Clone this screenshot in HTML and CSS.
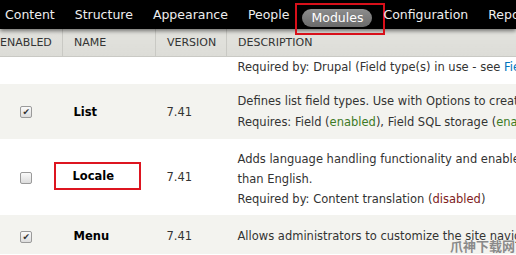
FILE: index.html
```html
<!DOCTYPE html>
<html lang="en">
<head>
  <meta charset="UTF-8" />
  <title>Modules</title>
  <link rel="stylesheet" href="styles.css">
</head>
<body>
  <div class="toolbar">
    <a href="#">Content</a>
    <a href="#">Structure</a>
    <a href="#">Appearance</a>
    <a href="#">People</a>
    <span class="marca"><a href="#" class="activo">Modules</a></span>
    <a href="#">Configuration</a>
    <a href="#">Reports</a>
  </div>

  <table class="modulos">
    <thead>
      <tr>
        <th class="col-check">Enabled</th>
        <th class="col-nombre">Name</th>
        <th class="col-version">Version</th>
        <th>Description</th>
      </tr>
    </thead>
    <tbody>
      <tr class="fila-1">
        <td></td>
        <td></td>
        <td></td>
        <td class="desc">Required by: Drupal (Field type(s) in use - see <a href="#">Field list</a>)</td>
      </tr>
      <tr class="par fila-2">
        <td class="col-check"><span class="check on">&#10004;</span></td>
        <td class="nombre">List</td>
        <td>7.41</td>
        <td class="desc">Defines list field types. Use with Options to create selection lists.<br>
          Requires: Field (<span class="si">enabled</span>), Field SQL storage (<span class="si">enabled</span>)</td>
      </tr>
      <tr class="fila-3">
        <td class="col-check"><span class="check"></span></td>
        <td class="nombre"><span class="marca-nombre">Locale</span></td>
        <td>7.41</td>
        <td class="desc">Adds language handling functionality and enables the translation of the user interface to languages other<br>than English.<br>
          Required by: Content translation (<span class="no">disabled</span>)</td>
      </tr>
      <tr class="par fila-4">
        <td class="col-check"><span class="check on">&#10004;</span></td>
        <td class="nombre">Menu</td>
        <td>7.41</td>
        <td class="desc">Allows administrators to customize the site navigation menu.</td>
      </tr>
    </tbody>
  </table>

  <div class="sello">爪神下载网</div>
</body>
</html>
```

FILE: styles.css
```css
body {
  margin: 0;
  font-family: "DejaVu Sans", Verdana, sans-serif;
  font-size: 11.5px;
  color: #333;
  background-color: #fff;
  overflow: hidden;
  width: 516px;
  height: 255px;
  position: relative;
}
.toolbar {
  height: 29px;
  background-color: #000;
  display: flex;
  align-items: center;
  white-space: nowrap;
  padding-left: 5px;
  box-shadow: 0 2px 4px rgba(0, 0, 0, 0.5);
  position: relative;
  z-index: 1;
}
.toolbar a {
  color: #eee;
  text-decoration: none;
  font-size: 12.5px;
  margin-right: 20px;
}
.marca {
  border: 2px solid #d8101a;
  padding: 4px 11px 6px 5px;
  margin: 4px -2px -4px -14px;
  display: flex;
}
.toolbar .marca a {
  margin-right: 0;
}
.toolbar .activo {
  background: linear-gradient(#8d8d8d, #6a6a6a);
  color: #fff;
  border-radius: 9px;
  padding: 1px 9px 2px;
}
.modulos {
  border-collapse: collapse;
  margin-left: -10px;
  width: 900px;
  table-layout: fixed;
}
.modulos th {
  background: linear-gradient(#e3e3de, #dcdcd7);
  border-left: 1px solid #c9c9c4;
  border-bottom: 1px solid #c9c9c4;
  text-transform: uppercase;
  font-weight: normal;
  font-size: 11px;
  color: #333;
  text-align: left;
  height: 27px;
  padding: 0 11px;
}
.modulos th:first-child {
  border-left: none;
}
.modulos th.col-check {
  padding-left: 10px;
  width: 51px;
}
.col-nombre {
  width: 70px;
}
.col-version {
  width: 48px;
}
.modulos td {
  padding: 8px 11px;
  line-height: 20px;
  vertical-align: middle;
}
.modulos td.col-check {
  text-align: center;
}
.par td {
  background-color: #f3f3ef;
}
.fila-1 td.desc {
  padding-top: 0;
  padding-bottom: 7px;
}
.fila-2 td.desc {
  padding-top: 7px;
  padding-bottom: 6px;
  line-height: 21px;
}
.fila-3 td.desc {
  padding-top: 10px;
  padding-bottom: 6px;
}
.fila-4 td {
  padding-top: 11px;
}
.desc a {
  color: #0074bd;
  text-decoration: none;
}
.nombre {
  font-weight: bold;
  color: #000;
}
.marca-nombre {
  display: inline-block;
  border: 2px solid #dd1520;
  padding: 0 25px 0 17px;
  margin-left: -20px;
  margin-top: -2px;
  line-height: 24px;
}
.si {
  color: #3d7a25;
}
.no {
  color: #7e1c1c;
}
.check {
  display: inline-block;
  width: 10px;
  height: 10px;
  border: 1px solid #9a9a9a;
  border-radius: 2px;
  background: linear-gradient(#fafafa, #dcdcdc);
  font-size: 9px;
  line-height: 10px;
  color: #333;
  vertical-align: middle;
}
.sello {
  position: absolute;
  right: 1px;
  bottom: 2px;
  white-space: nowrap;
  font-family: "Noto Sans CJK SC", sans-serif;
  font-weight: bold;
  font-size: 13px;
  line-height: 14px;
  color: #8a8a8a;
}
```
